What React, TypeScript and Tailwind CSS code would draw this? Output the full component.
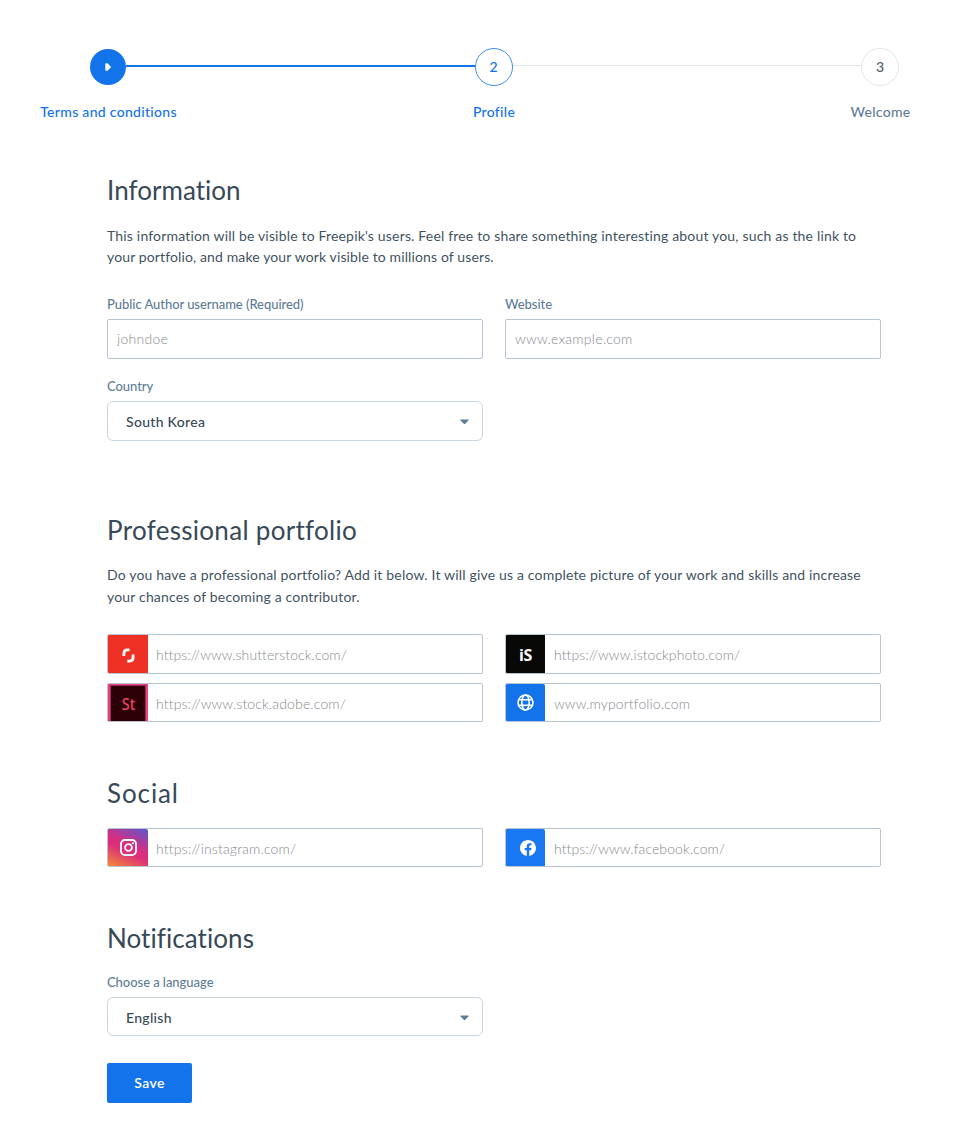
import { ReactNode, useState } from 'react';

interface FieldProps {
  placeholder: string;
  label?: string;
  icon?: ReactNode;
  height?: string;
  inputClass?: string;
}

function Label({ children }: { children: ReactNode }) {
  return (
    <label className="mb-[7px] block h-4 text-[13px] leading-4 font-medium tracking-[-0.05px] whitespace-nowrap text-[#5f7d95]">
      {children}
    </label>
  );
}

function Field({ placeholder, label, icon, height = 'h-10', inputClass = 'pl-2 pt-0.5 tracking-[0.13px]' }: FieldProps) {
  return (
    <div>
      {label && <Label>{label}</Label>}
      <div className={`flex w-[376px] overflow-hidden rounded-[2px] border border-[#b6c5d1] ${height}`}>
        {icon}
        <input
          type="text"
          placeholder={placeholder}
          className={`min-w-0 flex-1 text-[14px] font-light text-[#374957] placeholder-[#86898f] outline-none ${inputClass}`}
        />
      </div>
    </div>
  );
}

function Select({ value, height = 'h-10 pt-px' }: { value: string; height?: string }) {
  return (
    <button
      type="button"
      className={`flex w-[376px] items-center justify-between rounded-[6px] border border-[#cbd6de] pl-[18px] pr-[13px] text-[14px] font-medium tracking-[0.3px] text-[#374957] ${height}`}
    >
      <span>{value}</span>
      <svg width="9" height="6" viewBox="0 0 9 6" fill="#5f7d95">
        <path d="M.9.5h7.2c.6 0 .8.6.4 1L5.2 4.8a1 1 0 0 1-1.4 0L.5 1.5C.1 1.100.3.5.9.5Z" />
      </svg>
    </button>
  );
}

function Step({ label, active, children }: { label: string; active?: boolean; children: ReactNode }) {
  return (
    <div className="flex w-[38px] shrink-0 flex-col items-center">
      {children}
      <span
        className={`mt-4 ml-px text-[14px] leading-5 font-medium tracking-[0.3px] whitespace-nowrap ${
          active ? 'text-[#1273eb]' : 'text-[#5f7d95]'
        }`}
      >
        {label}
      </span>
    </div>
  );
}

const headingClass = 'h-8 text-[26px] leading-8 font-normal text-[#374957]';
const textClass = 'text-[14px] text-[#42535f] whitespace-nowrap';

function ShutterstockIcon() {
  return (
    <div className="flex w-10 shrink-0 items-center justify-center bg-[#ee3124] pt-0.5">
      <svg width="13" height="15" viewBox="0 0 13 15" fill="none" stroke="#fff" strokeWidth="2.800">
        <path d="M1.900 8V5.400Q1.900 1.900 5.400 1.900H7.500" />
        <path d="M11.100 6.500V9.600Q11.100 13.100 7.600 13.100H5.200" />
      </svg>
    </div>
  );
}

function AdobeStockIcon() {
  return (
    <div className="flex w-10 shrink-0 border-2 border-t border-b-0 border-[#e8417c] bg-[#2d0008]">
      <span className="flex h-full w-full items-center justify-center border border-b-0 border-[#a3285a] pt-px font-['Noto_Sans',sans-serif] text-[16px] leading-none font-medium text-[#f0426c]">
        <span className="scale-x-90">St</span>
      </span>
    </div>
  );
}

function IStockIcon() {
  return (
    <div className="flex w-[39px] shrink-0 items-center justify-center bg-[#080807] pt-0.5 font-['Open_Sans',sans-serif] text-[16px] leading-none font-bold tracking-[-0.4px] text-white">
      iS
    </div>
  );
}

function GlobeIcon() {
  return (
    <div className="flex w-[39px] shrink-0 items-center justify-center rounded-tr-[2px] bg-[#1273eb]">
      <svg width="17" height="17" viewBox="0 0 17 17" fill="none" stroke="#fff" strokeWidth="1.600">
        <circle cx="8.500" cy="8.500" r="7.500" />
        <ellipse cx="8.500" cy="8.500" rx="3.700" ry="7.500" />
        <path d="M1.600 5.700h13.800M1.600 11.300h13.800" />
      </svg>
    </div>
  );
}

function InstagramIcon() {
  return (
    <div className="flex w-10 shrink-0 items-center justify-center rounded-tr-[2px] bg-[linear-gradient(25deg,#f58a35_0%,#dc2e7b_42%,#d92e7f_55%,#5a57cf_100%)] pl-px pb-px">
      <svg width="17" height="17" viewBox="0 0 17 17" fill="none" stroke="#fff">
        <rect x="1" y="1" width="15" height="15" rx="4" strokeWidth="1.800" />
        <circle cx="8.500" cy="8.500" r="3.400" strokeWidth="1.800" />
        <circle cx="12.900" cy="4.200" r="1" fill="#fff" stroke="none" />
      </svg>
    </div>
  );
}

function FacebookIcon() {
  return (
    <div className="flex w-[39px] shrink-0 items-center justify-center rounded-tr-[2px] bg-[#1877f2] pl-1 pt-px">
      <svg width="16" height="16" viewBox="0 0 24 24" fill="#fff">
        <path d="M24 12.073c0-6.627-5.373-12-12-12s-12 5.373-12 12c0 5.990 4.388 10.954 10.125 11.854v-8.385H7.078v-3.470h3.047V9.430c0-3.007 1.792-4.669 4.533-4.669 1.312 0 2.686.235 2.686.235v2.953H15.830c-1.491 0-1.956.925-1.956 1.874v2.250h3.328l-.532 3.470h-2.796v8.385C19.612 23.027 24 18.062 24 12.073z" />
      </svg>
    </div>
  );
}

export default function App() {
  const [country] = useState('South Korea');
  const [language] = useState('English');

  return (
    <div className="h-[1144px] w-[969px] overflow-hidden bg-white pt-12 font-[Lato,sans-serif]">
      {/* Stepper */}
      <div className="ml-[89px] flex h-[74px] w-[810px]">
        <Step label="Terms and conditions" active>
          <div className="my-px flex h-9 w-9 items-center justify-center rounded-full bg-[#1273eb]">
            <svg width="6" height="8" viewBox="0 0 6 8" fill="#fff">
              <path d="M1 .3h1.600L5.700 3.500v1L2.600 7.700H1Q.3 7.700.3 7V1Q.3.3 1 .3Z" />
            </svg>
          </div>
        </Step>
        <div className="-ml-px mt-[17px] h-0.5 flex-1 bg-[#1273eb]" />
        <Step label="Profile" active>
          <div className="flex h-[38px] w-[38px] items-center justify-center rounded-full border border-[#3f8ff0] pb-0.5 text-[14px] font-medium text-[#1273eb]">
            2
          </div>
        </Step>
        <div className="mt-[17px] h-px flex-1 bg-[#dfe6eb]" />
        <Step label="Welcome">
          <div className="flex h-[38px] w-[38px] items-center justify-center rounded-full border border-[#dfe6eb] pb-0.5 text-[14px] font-medium text-[#4b6072]">
            3
          </div>
        </Step>
      </div>

      <form className="ml-[107px] w-[774px]">
        {/* Information */}
        <section className="pt-[52px]">
          <h2 className={`${headingClass} tracking-[0.04px]`}>Information</h2>
          <p className={`mt-[19px] h-11 leading-[21px] ${textClass}`}>
            <span className="tracking-[0.175px]">
              This information will be visible to Freepik's users. Feel free to share something interesting about you, such as the link to
            </span>
            <br />
            <span className="tracking-[0.125px]">your portfolio, and make your work visible to millions of users.</span>
          </p>
          <div className="mt-[27px] grid grid-cols-2 gap-x-[22px] gap-y-[19px]">
            <Field label="Public Author username (Required)" placeholder="johndoe" inputClass="pl-[9px] pb-px tracking-[0.28px]" />
            <Field label="Website" placeholder="www.example.com" inputClass="pl-[9px] pb-px tracking-[0.24px]" />
            <div>
              <Label>Country</Label>
              <Select value={country} />
            </div>
          </div>
        </section>

        {/* Professional portfolio */}
        <section className="pt-[73px]">
          <h2 className={`${headingClass} tracking-[0.3px]`}>Professional portfolio</h2>
          <p className={`mt-[18px] h-11 leading-[22px] tracking-[0.175px] ${textClass}`}>
            <span>Do you have a professional portfolio? Add it below. It will give us a complete picture of your work and skills and increase</span>
            <br />
            <span>your chances of becoming a contributor.</span>
          </p>
          <div className="mt-[26px] grid grid-cols-2 gap-x-[22px] gap-y-[9px]">
            <Field icon={<ShutterstockIcon />} placeholder="https://www.shutterstock.com/" inputClass="pl-2 pt-px tracking-[0.09px]" />
            <Field icon={<IStockIcon />} placeholder="https://www.istockphoto.com/" inputClass="pl-[9px] pt-px tracking-[0.08px]" />
            <Field height="h-[39px]" icon={<AdobeStockIcon />} placeholder="https://www.stock.adobe.com/" inputClass="pl-2 pt-0.5 tracking-[0.15px]" />
            <Field height="h-[39px]" icon={<GlobeIcon />} placeholder="www.myportfolio.com" inputClass="pl-[9px] pt-0.5 tracking-[0.13px]" />
          </div>
        </section>

        {/* Social */}
        <section className="pt-[55px]">
          <h2 className={`${headingClass} tracking-[0.9px]`}>Social</h2>
          <div className="mt-[19px] grid grid-cols-2 gap-x-[22px]">
            <Field height="h-[39px]" icon={<InstagramIcon />} placeholder="https://instagram.com/" inputClass="pl-2 pt-0.5 tracking-[0.16px]" />
            <Field height="h-[39px]" icon={<FacebookIcon />} placeholder="https://www.facebook.com/" inputClass="pl-[9px] pt-0.5 tracking-[0.1px]" />
          </div>
        </section>

        {/* Notifications */}
        <section className="pt-[55px]">
          <h2 className={`${headingClass} tracking-[0.07px]`}>Notifications</h2>
          <div className="mt-5">
            <Label>Choose a language</Label>
            <Select value={language} height="h-[39px] pt-0.5" />
          </div>
        </section>

        <button
          type="button"
          className="mt-[27px] flex h-10 w-[85px] items-center justify-center rounded-[2px] bg-[#1273eb] pb-px text-[14px] font-semibold tracking-[0.4px] text-white"
        >
          Save
        </button>
      </form>
    </div>
  );
}
